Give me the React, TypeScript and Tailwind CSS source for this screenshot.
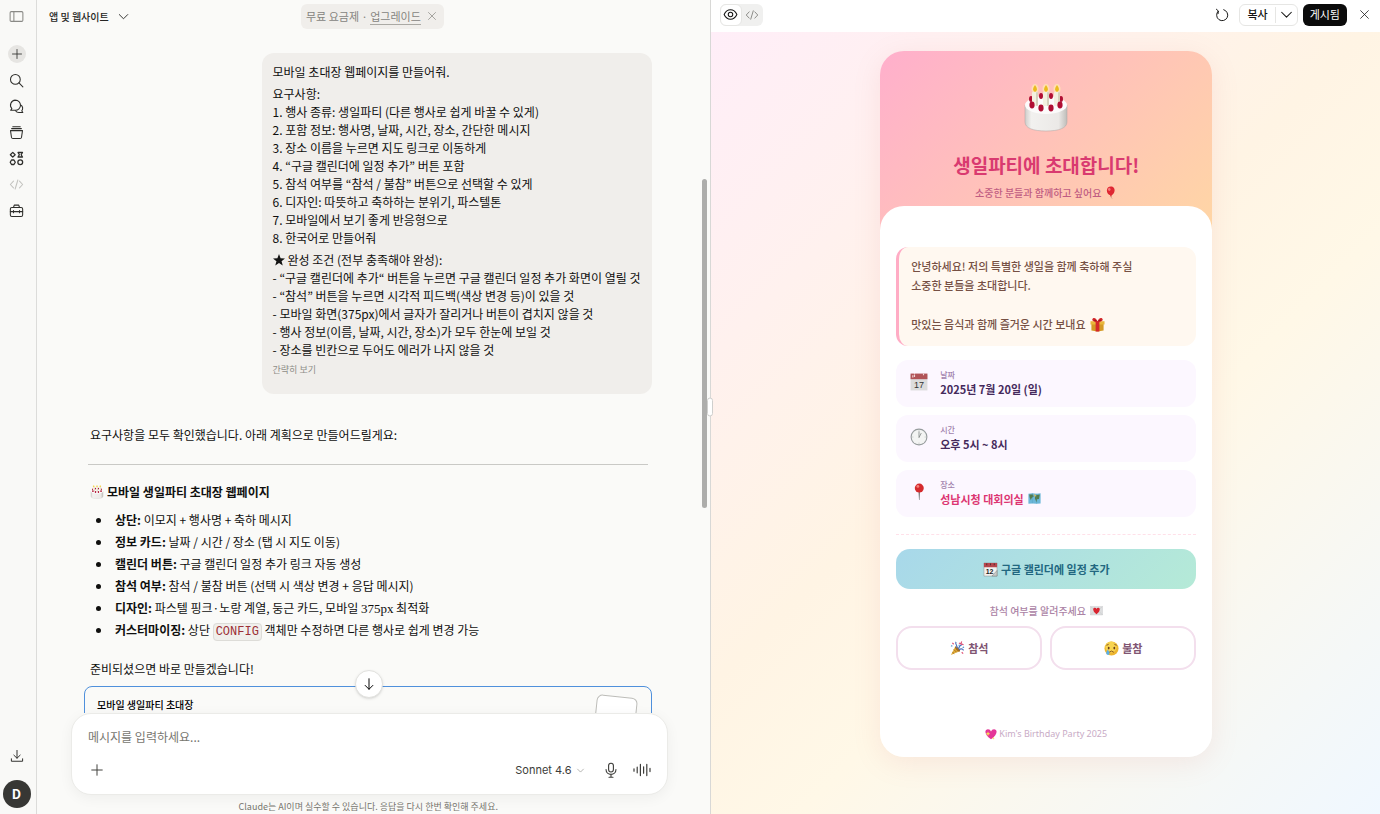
import React from 'react';

type IconProps = { className?: string; children?: React.ReactNode; box?: string };

const Line: React.FC<IconProps> = ({ className = 'size-4', children, box = '0 0 20 20' }) => (
    <svg viewBox={box} className={className} fill="none" stroke="currentColor" strokeWidth="1.4" strokeLinecap="round" strokeLinejoin="round" aria-hidden="true">
        {children}
    </svg>
);

const Emoji: React.FC<IconProps> = ({ className = 'size-[14px]', children, box = '0 0 32 32' }) => (
    <svg viewBox={box} className={`inline-block shrink-0 ${className}`} aria-hidden="true">
        {children}
    </svg>
);

const CodeIcon = ({ className }: { className?: string }) => (
    <Line className={className}>
        <path d="M6 5.5 1.8 10 6 14.5M14 5.5l4.2 4.5-4.2 4.5M11.8 4 8.2 16" />
    </Line>
);

const Chevron = ({ className }: { className?: string }) => (
    <Line className={className}><path d="m3.5 7 6.5 6.5L16.5 7" /></Line>
);

const Plus = ({ className }: { className?: string }) => (
    <Line className={className}><path d="M10 2.5v15M2.5 10h15" /></Line>
);

const Close = ({ className }: { className?: string }) => (
    <Line className={className}><path d="m3 3 14 14M17 3 3 17" /></Line>
);

const Cake = ({ className }: { className?: string }) => (
    <Emoji className={className} box="0 0 44 48">
        <defs>
            <linearGradient id="cakeSide" x1="0" x2="1" y1="0" y2="0">
                <stop offset="0" stopColor="#cfcdca" />
                <stop offset=".15" stopColor="#f2f1ef" />
                <stop offset=".8" stopColor="#ebe9e7" />
                <stop offset="1" stopColor="#bfbdb9" />
            </linearGradient>
        </defs>
        <path d="M1 21v17c0 6 8 9 21 9s21-3 21-9V21z" fill="url(#cakeSide)" stroke="#aaa7a4" strokeWidth=".5" />
        <ellipse cx="22" cy="21" rx="21" ry="9" fill="#fcfbfb" />
        <g fill="#b00f33">
            <ellipse cx="7" cy="15" rx="2" ry="3" />
            <ellipse cx="37" cy="15" rx="2" ry="3" />
            <ellipse cx="17" cy="12" rx="2" ry="3" />
            <ellipse cx="27" cy="12" rx="2" ry="3" />
        </g>
        {[11, 22, 33].map(x => (
            <g key={x}>
                <ellipse cx={x} cy="5" rx="3.5" ry="5" fill="#fff3b0" opacity=".6" />
                <rect x={x - 3} y="8" width="6" height="14" rx="1" fill="#f3f0e0" />
                <rect x={x + 1} y="8" width="2" height="14" rx="1" fill="#d6d1bd" />
                <path d={`M${x} 1q4 5 0 7q-4-2 0-7`} fill="#eabc1f" />
            </g>
        ))}
        <g fill="#b00f33">
            <ellipse cx="8" cy="21" rx="2.6" ry="3.4" />
            <ellipse cx="17" cy="24" rx="2.6" ry="3.4" />
            <ellipse cx="27" cy="24" rx="2.6" ry="3.4" />
            <ellipse cx="36" cy="21" rx="2.6" ry="3.4" />
        </g>
    </Emoji>
);

const Balloon = () => (
    <Emoji className="size-[13px]">
        <path d="M18 23q-3 4 2 8" fill="none" stroke="#bc8a77" strokeWidth="1.5" />
        <path d="M17 1c6 0 10 5 9 11-1 5-4 9-8 11l2 2h-6l2-2C11 22 7 17 7 11 7 5 11 1 17 1" fill="#df2732" />
        <ellipse cx="13" cy="8" rx="3" ry="4" fill="#f8797b" />
    </Emoji>
);

const Gift = () => (
    <Emoji className="size-[15px]">
        <path d="M3 12h26v17l-13 2-13-2z" fill="#d59a25" />
        <path d="M1 9h30v7H1z" fill="#e9b73b" />
        <path d="M12 9h8v22h-8z" fill="#d5282b" />
        <path d="M16 11C9 11 2 7 6 3c4-3 9 2 10 7 1-5 6-10 10-7 4 4-3 8-10 8" fill="#d5282b" />
        <path d="M15 9C11 9 7 7 8 6s5 0 7 3m2 0c4 0 8-2 7-3s-5 0-7 3" fill="#871a1b" />
    </Emoji>
);

const Calendar = () => (
    <Emoji className="size-[18px]">
        <path d="M1 3h30v28H1z" fill="#dcdcdc" />
        <path d="M1 1h30v10H1z" fill="#b15458" />
        <path d="M5 4v4m3-5v4m16-6v3M8 0v2" stroke="#f1d6d6" strokeWidth="2" />
        <text x="16" y="27" textAnchor="middle" fontSize="16" fontFamily="Liberation Sans" fill="#333">17</text>
    </Emoji>
);

const Clock = () => (
    <Emoji className="size-[18px]">
        <circle cx="16" cy="16" r="15" fill="#969c9d" />
        <circle cx="16" cy="16" r="13" fill="#f3f4f3" />
        <path d="M16 17V6m0 11 4-8" stroke="#777b7b" strokeWidth="1.3" fill="none" />
        <path d="M16 4v2m12 10h-2M16 28v-2M4 16h2" stroke="#a3a6a6" />
    </Emoji>
);

const Pin = () => (
    <Emoji className="size-[18px]">
        <path d="M15 15h3l-1 15h-1z" fill="#7d7e80" />
        <circle cx="16.5" cy="9" r="8" fill="#d52b2d" />
        <circle cx="14" cy="6" r="2.5" fill="#f7837d" />
    </Emoji>
);

const WorldMap = () => (
    <Emoji className="size-[13px]">
        <path d="M1 4 11 3l10 1 10-1v25l-10 1-10-1-10 1z" fill="#6bb7d8" />
        <path d="M3 6h9l2 5-5 4-2 5-3-7zm15 2 11-2-2 11-5 1-1 7-4-9z" fill="#567c4b" />
        <path d="m14 5 7 3-4 4z" fill="#d5b95c" />
        <path d="M11 3v25M21 4v25" stroke="#408fab" opacity=".5" />
    </Emoji>
);

const TearOff = () => (
    <Emoji className="size-[15px]">
        <path d="M2 2h28v28H2z" fill="#f2f2f0" stroke="#888" />
        <path d="M2 2h28v9H2z" fill="#b6464d" />
        <path d="M8 3v4m8-4v4m8-4v4" stroke="#512a2d" strokeWidth="2" />
        <text x="14" y="26" textAnchor="middle" fontSize="15" fontFamily="Liberation Sans" fill="#222">12</text>
        <path d="m19 30 11-12v12z" fill="#c9c9c7" stroke="#777" />
    </Emoji>
);

const LoveLetter = () => (
    <Emoji className="size-[13px]">
        <path d="M1 6h30v21H1z" fill="#dddedf" stroke="#c6c7c9" />
        <path d="m1 6 15 13L31 6M1 27l11-11m19 11L20 16" fill="none" stroke="#bfc0c2" />
        <path d="M16 25C5 17 7 8 12 9q3 0 4 3 1-3 4-3c5-1 7 8-4 16" fill="#d92530" />
    </Emoji>
);

const Popper = () => (
    <Emoji className="size-[15px]">
        <path d="m2 30 9-18 9 10z" fill="#dfad37" />
        <path d="m5 24 4 3m-1-9 6 6" stroke="#a86e20" strokeWidth="2" />
        <ellipse cx="16" cy="17" rx="3" ry="7" transform="rotate(-42 16 17)" fill="#a66d22" />
        <path d="M14 15C18 9 9 7 13 2m5 15q2-8 9-10m-8 12q6-5 10 1" stroke="#4d72bd" strokeWidth="2.5" fill="none" />
        <path d="m19 4 3 2m3-5-2 5 6 2M5 4l3 3m17 17 3 3" stroke="#e05377" strokeWidth="2.5" fill="none" />
        <path d="m2 10 3 1m14-3 1 2m7 4 3-1" stroke="#4a93d0" strokeWidth="2.5" />
    </Emoji>
);

const Crying = () => (
    <Emoji className="size-[15px]">
        <circle cx="16" cy="16" r="15" fill="#edb52f" />
        <circle cx="15" cy="13" r="12" fill="#f8d450" />
        <path d="M5 9q4 0 5-3m12 0q1 3 5 3M11 24q5-5 10 0" fill="none" stroke="#83501c" strokeWidth="2" />
        <ellipse cx="10" cy="15" rx="2" ry="3" fill="#69401c" />
        <ellipse cx="22" cy="15" rx="2" ry="3" fill="#69401c" />
        <path d="M8 18q7 9 1 12-8-1-1-12" fill="#59aee5" />
    </Emoji>
);

const SparkHeart = () => (
    <Emoji className="size-3">
        <path d="M16 30C-4 17-1 3 8 3q6 0 8 6 2-6 8-6c9 0 12 14-8 27" fill="#e43697" />
        <path d="m8 9 2 4 4 2-4 2-2 4-2-4-4-2 4-2zm14 14 1 3 3 1-3 1-1 3-1-3-3-1 3-1z" fill="#f9d756" />
    </Emoji>
);

const conditions = [
    '- “구글 캘린더에 추가“ 버튼을 누르면 구글 캘린더 일정 추가 화면이 열릴 것',
    '- “참석” 버튼을 누르면 시각적 피드백(색상 변경 등)이 있을 것',
    '- 모바일 화면(375px)에서 글자가 잘리거나 버튼이 겹치지 않을 것',
    '- 행사 정보(이름, 날짜, 시간, 장소)가 모두 한눈에 보일 것',
    '- 장소를 빈칸으로 두어도 에러가 나지 않을 것',
];

const requirements = [
    '1. 행사 종류: 생일파티 (다른 행사로 쉽게 바꿀 수 있게)',
    '2. 포함 정보: 행사명, 날짜, 시간, 장소, 간단한 메시지',
    '3. 장소 이름을 누르면 지도 링크로 이동하게',
    '4. “구글 캘린더에 일정 추가” 버튼 포함',
    '5. 참석 여부를 “참석 / 불참” 버튼으로 선택할 수 있게',
    '6. 디자인: 따뜻하고 축하하는 분위기, 파스텔톤',
    '7. 모바일에서 보기 좋게 반응형으로',
    '8. 한국어로 만들어줘',
];

const plan: { label: string; text: React.ReactNode }[] = [
    { label: '상단:', text: '이모지 + 행사명 + 축하 메시지' },
    { label: '정보 카드:', text: '날짜 / 시간 / 장소 (탭 시 지도 이동)' },
    { label: '캘린더 버튼:', text: '구글 캘린더 일정 추가 링크 자동 생성' },
    { label: '참석 여부:', text: '참석 / 불참 버튼 (선택 시 색상 변경 + 응답 메시지)' },
    {
        label: '디자인:',
        text: <>파스텔 핑크·노랑 계열, 둥근 카드, 모바일 <span className="font-['Liberation_Serif',serif] text-[13px]">375px</span> 최적화</>,
    },
    {
        label: '커스터마이징:',
        text: (
            <>
                상단{' '}
                <code className="rounded border border-[#dddcd8] bg-[#f0efec] px-[2px] py-px font-['Liberation_Mono',monospace] text-[12px] text-[#9c2f36]">CONFIG</code>
                {' '}객체만 수정하면 다른 행사로 쉽게 변경 가능
            </>
        ),
    },
];

const NavButton: React.FC<{ label: string; className?: string; children: React.ReactNode }> = ({ label, className = '', children }) => (
    <button type="button" aria-label={label} className={`flex size-[18px] items-center justify-center ${className}`}>
        {children}
    </button>
);

const Sidebar = () => (
    <nav className="flex w-[37px] shrink-0 flex-col items-center border-r border-[#dcdcda] bg-[#f9f9f7] pt-[7px] pr-[3px] pb-[6px] text-[#2e2e2b]">
        <NavButton label="사이드바" className="mb-5 text-[#8a8a86]">
            <Line className="size-[15px]"><rect x="1.5" y="3.5" width="17" height="13" rx="1.5" /><path d="M6.5 3.5v13" /></Line>
        </NavButton>
        <div className="flex flex-col items-center gap-2">
            <NavButton label="새 채팅" className="rounded-full bg-[#e6e5e2]"><Plus className="size-3" /></NavButton>
            <NavButton label="검색">
                <Line className="size-[15px]"><circle cx="8.5" cy="8.5" r="6.5" /><path d="m13.3 13.3 5.2 5.2" /></Line>
            </NavButton>
            <NavButton label="채팅">
                <Line className="size-[15px]">
                    <path d="M8.5 1.5a6.8 6.8 0 1 1 0 13.600H2.200l1.600-2.200A6.800 6.800 0 0 1 8.500 1.500" />
                    <path d="M15.600 8c3 1.500 3.400 5.500 1.400 7.700l1.400 2.300h-5.200c-2 0-3.600-1-4.400-2.400" />
                </Line>
            </NavButton>
            <NavButton label="프로젝트">
                <Line className="size-[15px]"><path d="M2 7.500h16l-1.300 8.800q-.3 1.700-2 1.700H5.300q-1.700 0-2-1.700zM3.500 4.800h13M5 2.200h10" /></Line>
            </NavButton>
            <NavButton label="아티팩트">
                <Line className="size-[15px]">
                    <path d="M5 1.800 8.200 5 5 8.200 1.800 5zM12 2h6l-1.800 3L18 8h-6l1.800-3zM3.400 12h3.200l1.800 3-1.800 3H3.400l-1.800-3z" strokeWidth="1.7" />
                    <circle cx="15" cy="15" r="3.2" strokeWidth="1.7" />
                </Line>
            </NavButton>
            <NavButton label="코드" className="text-[#c3c3bf]"><CodeIcon className="size-[15px]" /></NavButton>
            <NavButton label="도구">
                <Line className="size-[15px]">
                    <rect x="1.8" y="6" width="16.4" height="12" rx="2" />
                    <path d="M6 6 7 2.800h6L14 6M1.800 11.500h16.400M6 10v3m8-3v3" />
                </Line>
            </NavButton>
        </div>
        <NavButton label="다운로드" className="mt-auto mb-[15px]">
            <Line className="size-[14px]"><path d="M10 2v11M5.500 8.800 10 13.200l4.500-4.400M2 14v3.500h16V14" /></Line>
        </NavButton>
        <button type="button" className="flex size-7 items-center justify-center rounded-full bg-[#373734] text-[13px] font-semibold text-white">D</button>
    </nav>
);

const UserMessage = () => (
    <div className="ml-auto w-fit max-w-full rounded-xl bg-[#f0eeeb] px-[11px] pt-[10px] pb-4 leading-[18px] text-[#0f0f0e]">
        <p>모바일 초대장 웹페이지를 만들어줘.</p>
        <div className="mt-1">
            <p>요구사항:</p>
            {requirements.map(r => <p key={r}>{r}</p>)}
        </div>
        <div className="mt-1">
            <p className="flex items-center gap-[3px]">
                <svg viewBox="0 0 24 24" className="size-3 fill-[#141413]" aria-hidden="true"><path d="m12 0 3.200 8.400 8.800.4-6.900 5.500L19.500 23 12 18.100 4.500 23l2.400-8.700L0 8.800l8.800-.4z" /></svg>
                완성 조건 (전부 충족해야 완성):
            </p>
            {conditions.map(c => <p key={c}>{c}</p>)}
        </div>
        <button type="button" className="mt-[3px] block text-[9px] leading-4 text-[#8e8d88]">간략히 보기</button>
    </div>
);

const Reply = () => (
    <div className="mt-8 text-[#0f0f0e]">
        <p className="pl-[6px] leading-[18px]">요구사항을 모두 확인했습니다. 아래 계획으로 만들어드릴게요:</p>
        <hr className="mx-1 mt-5 border-[#c9c9c6]" />
        <h2 className="mt-[18px] flex items-center gap-[3px] pl-[6px] leading-[18px] font-bold">
            <Cake className="size-[14px]" />
            모바일 생일파티 초대장 웹페이지
        </h2>
        <ul className="mt-2 list-disc pl-[28px] leading-[22px] marker:text-[12px]">
            {plan.map(p => (
                <li key={p.label} className="h-[22px] pl-[3px]"><strong>{p.label}</strong> {p.text}</li>
            ))}
        </ul>
        <p className="mt-[19px] pl-[6px] leading-[18px]">준비되셨으면 바로 만들겠습니다!</p>
    </div>
);

const Composer = () => (
    <form className="relative mr-[42px] ml-[34px] shrink-0 rounded-[20px] border border-[#ebebe8] bg-white px-4 pt-[14px] pb-[14px] shadow-[0_3px_14px_rgba(0,0,0,0.05)]" onSubmit={e => e.preventDefault()}>
        <button type="button" aria-label="맨 아래로" className="absolute -top-11 left-1/2 flex size-7 -translate-x-1/2 items-center justify-center rounded-full border border-[#e2e2df] bg-white shadow-sm">
            <Line className="size-[14px]"><path d="M10 2.500v15M4.500 12l5.500 5.500 5.500-5.500" /></Line>
        </button>
        <input type="text" aria-label="메시지" placeholder="메시지를 입력하세요..." className="block h-[18px] w-full bg-transparent text-[12px] outline-none placeholder:text-[#77766f]" />
        <div className="mt-[14px] flex h-5 items-center text-[#3d3d3a]">
            <button type="button" aria-label="추가" className="ml-[2px]"><Plus className="size-[14px]" /></button>
            <button type="button" className="ml-auto flex items-center gap-1 font-['Inter','Noto_Sans_CJK_KR',sans-serif] text-[11px]">
                Sonnet 4.6
                <Chevron className="size-[9px] text-[#8a8a86]" />
            </button>
            <button type="button" aria-label="음성 입력" className="ml-[18px]">
                <Line className="size-4"><rect x="7" y="1.5" width="6" height="11" rx="3" /><path d="M3.800 9.500c0 8 12.400 8 12.400 0M10 15.500V19M7.500 19h5" /></Line>
            </button>
            <button type="button" aria-label="음성 모드" className="ml-[14px]">
                <Line className="h-4 w-[18px]" box="0 0 22 20"><path d="M1 8.500v3M5 6.500v7M9 3v14M13 6v8M17 3v14M21 8v4" strokeWidth="1.5" /></Line>
            </button>
        </div>
    </form>
);

const ChatPane = () => (
    <main className="relative flex min-w-0 flex-[673] flex-col bg-[#fafaf8]">
        <header className="flex h-8 shrink-0 items-center">
            <button type="button" className="ml-3 flex w-[252px] items-center gap-2 text-[10px] font-medium text-[#252523]">
                앱 및 웹사이트
                <Chevron className="size-[13px]" />
            </button>
            <div className="flex h-[25px] items-center rounded-md bg-[#f0eeeb] pr-[3px] pl-[5px] text-[11px] text-[#85847e]">
                <span>무료 요금제 · <a href="#upgrade" className="border-b border-[#aaa9a4]">업그레이드</a></span>
                <button type="button" aria-label="닫기" className="ml-[2px] p-1"><Close className="size-[10px]" /></button>
            </div>
        </header>
        <div className="min-h-0 flex-1 overflow-hidden pt-[21px] pr-[58px] pl-[47px] text-[12px]">
            <UserMessage />
            <Reply />
            <article className="mt-2 flex h-20 justify-between rounded-lg border border-[#4f90dc] px-[12px] pt-[9px]">
                <h3 className="text-[10px] leading-[18px] font-medium">모바일 생일파티 초대장</h3>
                <div className="mr-1 h-[60px] w-[41px] rotate-6 rounded-md border border-[#bdbdb9] bg-white pt-[14px] text-center text-[#77766f]">
                    <CodeIcon className="mx-auto size-3" />
                </div>
            </article>
        </div>
        <Composer />
        <p className="shrink-0 pt-[5px] pr-[10px] text-center text-[9px] leading-[14px] text-[#77766f]">Claude는 AI이며 실수할 수 있습니다. 응답을 다시 한번 확인해 주세요.</p>
        <div className="absolute top-[22%] right-[3px] h-[329px] w-[5px] rounded-full bg-[#adadab]" />
    </main>
);

const InfoCard: React.FC<{ icon: React.ReactNode; label: string; children: React.ReactNode }> = ({ icon, label, children }) => (
    <div className="flex h-[47px] items-center gap-3 rounded-xl bg-[#fcf7ff] px-[14px] pb-[3px]">
        {icon}
        <div>
            <dt className="text-[8px] leading-[13px] font-medium text-[#a07fac]">{label}</dt>
            <dd className="text-[11px] leading-4 font-bold text-[#452a5c]">{children}</dd>
        </div>
    </div>
);

const Invitation = () => (
    <section className="w-[332px] overflow-hidden rounded-3xl bg-linear-[135deg,#ffafcc,#ffd6a5] bg-[length:100%_180px] bg-no-repeat shadow-[0_6px_28px_rgba(220,130,130,0.14)]">
        <header className="flex flex-col items-center pt-8">
            <Cake className="h-[50px] w-[44px]" />
            <h1 className="mt-[18px] text-[19px] leading-7 font-bold text-[#d93a70]">생일파티에 초대합니다!</h1>
            <p className="mt-[3px] flex h-5 items-center gap-[3px] text-[10px] font-medium text-[#bf5c82]">소중한 분들과 함께하고 싶어요 <Balloon /></p>
        </header>
        <div className="mt-1 rounded-t-3xl bg-white px-4 pt-[41px] pb-[14px]">
            <div className="rounded-xl border-l-[3px] border-[#ffacc5] bg-[#fff8f0] px-3 pt-[10px] pb-3 text-[11px] leading-[19px] font-medium text-[#765044]">
                <p>안녕하세요! 저의 특별한 생일을 함께 축하해 주실<br />소중한 분들을 초대합니다.</p>
                <p className="mt-5 flex items-center gap-1">맛있는 음식과 함께 즐거운 시간 보내요 <Gift /></p>
            </div>
            <dl className="mt-[14px] flex flex-col gap-2">
                <InfoCard icon={<Calendar />} label="날짜">2025년 7월 20일 (일)</InfoCard>
                <InfoCard icon={<Clock />} label="시간">오후 5시 ~ 8시</InfoCard>
                <InfoCard icon={<Pin />} label="장소">
                    <a href="#map" className="flex items-center gap-1 text-[#dc3572]">성남시청 대회의실 <WorldMap /></a>
                </InfoCard>
            </dl>
            <hr className="mt-[17px] border-dashed border-[#ffe0e9]" />
            <button type="button" className="mt-[14px] flex h-10 w-full items-center justify-center gap-[3px] rounded-[14px] bg-linear-[135deg,#a8d8ea,#b5ead7] text-[11px] font-bold text-[#226780]">
                <TearOff />구글 캘린더에 일정 추가
            </button>
            <p className="mt-3 flex h-[18px] items-center justify-center gap-1 text-[10px] font-medium text-[#ab83a5]">참석 여부를 알려주세요 <LoveLetter /></p>
            <div className="mt-[7px] grid grid-cols-2 gap-2 text-[11px] font-bold text-[#805572]">
                <button type="button" className="flex h-11 items-center justify-center gap-[3px] rounded-[16px] border-2 border-[#f3dfed]"><Popper />참석</button>
                <button type="button" className="flex h-11 items-center justify-center gap-[3px] rounded-[16px] border-2 border-[#f3dfed]"><Crying />불참</button>
            </div>
            <footer className="mt-[55px] flex h-[18px] items-center justify-center gap-[2px] font-['Noto_Sans','Noto_Sans_CJK_KR',sans-serif] text-[9px] text-[#c9abc6]">
                <SparkHeart />Kim's Birthday Party 2025
            </footer>
        </div>
    </section>
);

const PreviewPane = () => (
    <aside className="relative flex min-w-0 flex-[670] flex-col border-l border-[#d8d8d6]">
        <header className="flex h-8 shrink-0 items-center bg-white pr-[10px] pb-[3px] pl-[9px] text-[11px] text-[#141413]">
            <div className="flex rounded-md bg-[#f0f0ef] text-[#8a8a86]">
                <button type="button" aria-label="미리보기" className="flex size-[22px] items-center justify-center rounded-md border border-[#e6e6e4] bg-white text-[#141413]">
                    <Line className="size-[15px]"><path d="M1.500 10C5.500 1.500 14.500 1.500 18.500 10 14.500 18.500 5.500 18.500 1.500 10" /><circle cx="10" cy="10" r="3" /></Line>
                </button>
                <button type="button" aria-label="코드" className="flex h-[22px] w-[21px] items-center justify-center"><CodeIcon className="size-[14px]" /></button>
            </div>
            <button type="button" aria-label="새로고침" className="mr-[10px] ml-auto">
                <Line className="size-[14px]"><path d="M4.500 4.500A8 8 0 1 0 12.500 2.400M2 1.800 4.800 4.300 4.400 8" /></Line>
            </button>
            <div className="mr-[5px] flex h-[22px] items-center rounded-md border border-[#e6e6e4]">
                <button type="button" className="px-[7px] font-medium">복사</button>
                <button type="button" aria-label="더 보기" className="flex h-4 items-center border-l border-[#e6e6e4] px-[3px]"><Chevron className="size-[15px]" /></button>
            </div>
            <button type="button" className="mr-3 h-[22px] rounded-md bg-[#0b0b0b] px-[7px] text-white">게시됨</button>
            <button type="button" aria-label="닫기"><Close className="size-[11px]" /></button>
        </header>
        <div className="flex min-h-0 flex-1 items-start justify-center overflow-hidden bg-linear-[135deg,#ffeef8_0%,#fff4e4_45%,#fff8e7_60%,#f0f8ff_100%] pt-[19px] pl-[2px]">
            <Invitation />
        </div>
        <div className="absolute top-1/2 -left-1 h-[19px] w-[6px] -translate-y-1/2 rounded-full border border-[#cfcfcd] bg-white" />
    </aside>
);

export default function App() {
    return (
        <div className="flex h-screen overflow-hidden bg-[#fafaf8] font-['Noto_Sans_CJK_KR',sans-serif]">
            <Sidebar />
            <ChatPane />
            <PreviewPane />
        </div>
    );
}
